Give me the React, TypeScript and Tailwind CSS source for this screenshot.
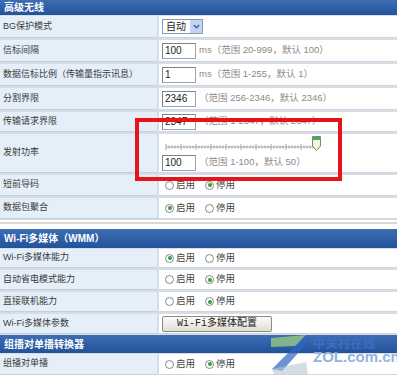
import React from "react";

const FONT = {
  fontFamily: '"Liberation Sans", "Noto Sans CJK SC", sans-serif',
};

type RowProps = {
  label: string;
  h: string;
  children?: React.ReactNode;
};

// 一行：左侧浅蓝标签格 + 右侧白色值格
const Row = ({ label, h, children }: RowProps) => (
  <>
    <div
      className={`${h} bg-[#e4eff9] border-b border-[#c5d0db] flex items-center pl-[3px] text-[9px] text-[#3a3a3a] whitespace-nowrap`}
    >
      {label}
    </div>
    <div
      className={`${h} bg-white border-b border-[#cfd5dc] flex items-center pl-[3px] text-[9.5px]`}
    >
      {children}
    </div>
  </>
);

const Header = ({ title, h }: { title: string; h: string }) => (
  <div
    className={`${h} bg-gradient-to-b from-[#3d6db3] to-[#22539a] flex items-center pl-[4px] text-white font-bold text-[10px]`}
  >
    {title}
  </div>
);

const Input = ({ value }: { value: string }) => (
  <div className="w-[34px] h-[16px] bg-white border border-[#9aa3ab] border-t-[#7b848c] border-l-[#7b848c] flex items-center pl-[2px] text-[10px] text-[#222] shrink-0">
    {value}
  </div>
);

const Hint = ({ text }: { text: string }) => (
  <span className="ml-[3px] text-[#8a8a8a] text-[9.5px] whitespace-nowrap">
    {text}
  </span>
);

const Radio = ({ checked, label }: { checked?: boolean; label: string }) => (
  <span className="flex items-center mr-[6px]">
    <span className="w-[9px] h-[9px] rounded-full border border-[#7d8c99] bg-white flex items-center justify-center ml-[4px]">
      {checked && (
        <span className="w-[4px] h-[4px] rounded-full bg-[#3a9b3a]" />
      )}
    </span>
    <span className="ml-[2px] text-[#444] text-[9.5px]">{label}</span>
  </span>
);

const Radios = ({ on }: { on: boolean }) => (
  <div className="flex items-center -ml-[1px]">
    <Radio checked={on} label="启用" />
    <Radio checked={!on} label="停用" />
  </div>
);

// 刻度尺 + 滑块
const Slider = () => {
  const ticks = [];
  for (let i = 0; i <= 50; i++) {
    const x = 1 + i * 3;
    const big = i % 5 === 0;
    ticks.push(
      <line
        key={i}
        x1={x}
        x2={x}
        y1={big ? 1 : 2.5}
        y2={big ? 7 : 5.5}
        stroke="#8b8f94"
        strokeWidth="0.8"
      />
    );
  }
  return (
    <div className="relative w-[160px] h-[16px] mb-[3px]">
      <svg
        width="156"
        height="9"
        viewBox="0 0 156 9"
        className="absolute left-[3px] top-[7px]"
      >
        <line x1="1" x2="151" y1="4" y2="4" stroke="#9a9ea3" strokeWidth="0.8" />
        {ticks}
      </svg>
      <svg
        width="9"
        height="15"
        viewBox="0 0 9 15"
        className="absolute left-[150px] top-0"
      >
        <path d="M0.5 0.5 H8.5 V10 L4.5 14.5 L0.5 10 Z" fill="#eef6e6" stroke="#6f8f6a" />
        <rect x="1" y="1" width="7" height="3" fill="#4fa35a" />
      </svg>
    </div>
  );
};

const ZolMark = () => (
  <div className="absolute left-[268px] top-[333px] flex items-start pointer-events-none">
    <svg width="42" height="41" viewBox="0 0 42 41">
      <polygon points="3,5 38,2 28,13 3,14" fill="#9fd07f" opacity="0.75" />
      <polygon points="38,2 41,8 14,38 4,36" fill="#2f64c0" opacity="0.7" />
      <polygon points="4,36 38,29 40,41 6,41" fill="#b7c6d3" opacity="0.6" />
    </svg>
    <div className="ml-[3px] mt-[3px] flex flex-col leading-none">
      <span
        className="text-[12px] leading-[13px] font-bold text-[#3c6fc4] tracking-[0.5px]"
        style={{ fontFamily: '"Noto Sans CJK SC", sans-serif' }}
      >
        中关村在线
      </span>
      <span className="text-[15px] leading-[16px] font-bold text-[#93b3da]">
        ZOL.com.cn
      </span>
    </div>
  </div>
);

export default function App() {
  return (
    <div
      className="relative w-[397px] h-[375px] overflow-hidden bg-white"
      style={FONT}
    >
      <Header title="高级无线" h="h-[15px]" />
      <div className="grid grid-cols-[157px_1fr] gap-x-[2px] gap-y-[2px] bg-[#d6dde5] pt-[1px] pb-[1px]">
        <Row label="BG保护模式" h="h-[22px]">
          <div className="w-[41px] h-[15px] border border-[#7f9db9] flex items-center">
            <span className="flex-1 pl-[3px] text-[10px] text-[#222]">自动</span>
            <span className="w-[12px] h-[13px] bg-[#c3d5f5] flex items-center justify-center">
              <svg width="7" height="5" viewBox="0 0 7 5">
                <path d="M0.8 1 L3.5 3.8 L6.2 1" fill="none" stroke="#4a5f8a" strokeWidth="1.4" />
              </svg>
            </span>
          </div>
        </Row>
        <Row label="信标间隔" h="h-[22px]">
          <Input value="100" />
          <Hint text="ms（范围 20-999，默认 100）" />
        </Row>
        <Row label="数据信标比例（传输量指示讯息）" h="h-[22px]">
          <Input value="1" />
          <Hint text="ms（范围 1-255，默认 1）" />
        </Row>
        <Row label="分割界限" h="h-[22px]">
          <Input value="2346" />
          <Hint text="（范围 256-2346，默认 2346）" />
        </Row>
        <Row label="传输请求界限" h="h-[20px]">
          <Input value="2347" />
          <Hint text="（范围 1-2347，默认 2347）" />
        </Row>
        <Row label="发射功率" h="h-[39px]">
          <div className="flex flex-col">
            <Slider />
            <div className="flex items-center">
              <Input value="100" />
              <Hint text="（范围 1-100，默认 50）" />
            </div>
          </div>
        </Row>
        <Row label="短前导码" h="h-[21px]">
          <Radios on={false} />
        </Row>
        <Row label="数据包聚合" h="h-[21px]">
          <Radios on={true} />
        </Row>
      </div>

      <div className="h-[9px] bg-white pt-[2px]">
        <div className="h-[2px] bg-[#ddd9d2]" />
      </div>

      <Header title="Wi-Fi多媒体（WMM）" h="h-[19px]" />
      <div className="grid grid-cols-[157px_1fr] gap-[2px] bg-[#d6dde5] pt-[1px] pb-[1px]">
        <Row label="Wi-Fi多媒体能力" h="h-[19px]">
          <Radios on={true} />
        </Row>
        <Row label="自动省电模式能力" h="h-[20px]">
          <Radios on={false} />
        </Row>
        <Row label="直接联机能力" h="h-[20px]">
          <Radios on={false} />
        </Row>
        <Row label="Wi-Fi多媒体参数" h="h-[20px]">
          <button
            className="w-[110px] h-[16px] rounded-[2px] border border-[#8a8a8a] bg-gradient-to-b from-[#fbfbf8] to-[#e2dfd6] text-[10px] text-[#222] flex items-center justify-center"
            style={{ fontFamily: '"Liberation Mono", "Noto Sans CJK SC", monospace' }}
          >
            Wi-Fi多媒体配置
          </button>
        </Row>
      </div>

      <Header title="组播对单播转换器" h="h-[18px]" />
      <div className="grid grid-cols-[157px_1fr] gap-[2px] bg-[#d6dde5] pt-[1px]">
        <Row label="组播对单播" h="h-[21px]">
          <Radios on={false} />
        </Row>
      </div>

      {/* 红色标注框 */}
      <div className="absolute left-[135px] top-[118px] w-[207px] h-[63px] border-[4px] border-[#e8121a] pointer-events-none" />

      <ZolMark />
    </div>
  );
}
